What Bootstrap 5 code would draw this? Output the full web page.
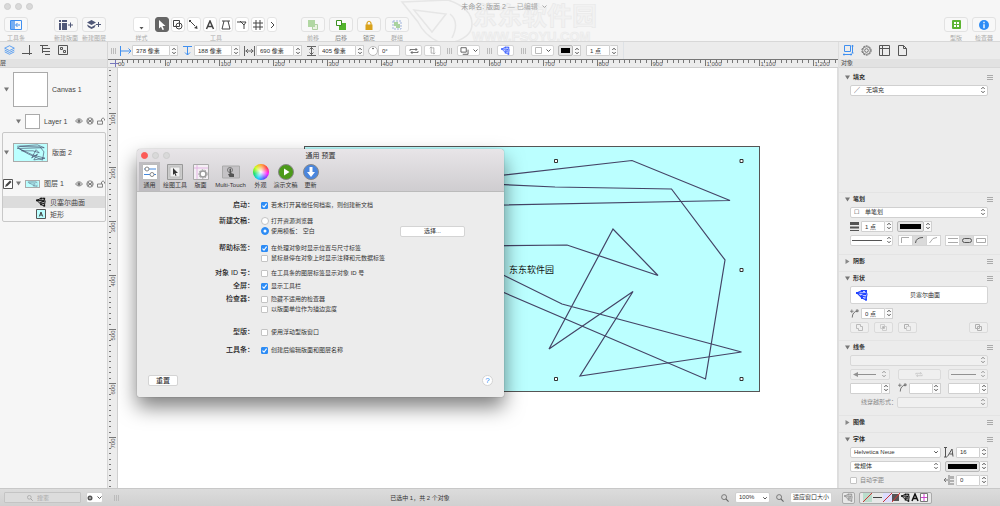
<!DOCTYPE html>
<html lang="zh-CN">
<head>
<meta charset="utf-8">
<meta name="viewport" content="width=device-width, initial-scale=1">
<title>未命名: 版面 2</title>
<link href="https://cdn.jsdelivr.net/npm/bootstrap@5.3.0/dist/css/bootstrap.min.css" rel="stylesheet">
<style>
body{font-family:"Liberation Sans","Noto Sans CJK SC",sans-serif;font-size:6px;line-height:8px;color:#333;background:#ececec;overflow:hidden}
svg{display:block;flex:none}
.ln{fill:none;stroke:currentColor;stroke-width:1}
/* window header */
.topbar{height:42px;background:#f6f6f6;border-bottom:1px solid #d8d8d8;overflow:hidden}
.titlerow{height:13px;font-size:7px;color:#aaa}
.dot{width:7px;height:7px;border-radius:50%;background:#d9d9d9;border:1px solid #cdcdcd}
.tool-item{width:24px;color:#aaa}
.tool-item span,.tool-label{display:block;text-align:center;white-space:nowrap;margin-top:2px;color:#aaa}
.tbtn{height:15px;width:24px;padding:0;border:1px solid #e2e2e2;border-radius:3px;background:#f8f8f8;display:flex;align-items:center;justify-content:center;color:#505878}
.sq{width:14px;background:#fff;border-color:#e4e4e4;color:#444}
.sq.active{background:#666!important;color:#fff!important;border-color:#666!important}
.w-style{width:17px}
.gap-a{margin-left:26px}.gap-b{margin-left:4px}.gap-c{margin-left:5px}.gap-d{margin-left:24px}
.wm{left:40%;top:0;pointer-events:none}
/* side columns */
.side-l{width:108px;background:#f6f6f6;border-right:1px solid #d6d6d6;flex:none}
.side-r{width:162px;background:#ececec;border-left:1px solid #dedede;flex:none}
.strip{height:17px;background:#ececec}
.caption{height:9px;line-height:9px;background:#e2e2e2;color:#444;border-bottom:1px solid #d8d8d8}
.tabbtn{width:18px;height:16px;padding:0;border:0;color:#555;display:flex;align-items:center;justify-content:center}
.blue{color:#3f8ff0!important}
.tree{font-size:7px;line-height:9px;color:#444}
.thumb{border:1px solid #aaa;background:#fff;flex:none}
.th-big{width:35px;height:35px}.th-wide{width:35px;height:19px;background:#bff}
.th-sm{width:15px;height:15px}.th-flat{width:15px;height:8px;background:#bff}
.box-sel{border:1px solid #c8c8c8;border-radius:2px;margin:4px 1px 0 2px;height:90px}
.sel-row{background:#dcdcdc}
.r-big{height:42px}.r-sm{height:22px}.r-leaf{height:12px;padding-left:33px}
/* controls */
.ctl{height:11px;min-height:0;padding:0 3px;font-size:6px;line-height:9px;border:1px solid #d0d0d0;border-radius:1px;background-color:#fff;color:#333;min-width:0;box-shadow:none}
select.ctl{border-radius:2px;background-image:url("data:image/svg+xml,%3Csvg xmlns='http://www.w3.org/2000/svg' viewBox='0 0 6 8'%3E%3Cpath d='M1.3 3L3 1.2 4.7 3M1.3 5L3 6.8 4.7 5' fill='none' stroke='%23555' stroke-width='.9'/%3E%3C/svg%3E");background-size:6px 8px;background-position:right 1px center;padding-right:8px}
select.ctl.down{background-image:url("data:image/svg+xml,%3Csvg xmlns='http://www.w3.org/2000/svg' viewBox='0 0 6 8'%3E%3Cpath d='M1.2 3.2L3 5 4.8 3.2' fill='none' stroke='%23444' stroke-width='.9'/%3E%3C/svg%3E")}
.ctl:disabled{background-color:#f2f2f2;opacity:.7}
.field{display:flex;flex:none}
.field .ctl{flex:1 1 0;width:0}
.stp{width:8px;height:11px;padding:0;border:1px solid #d0d0d0;border-left:0;background:#fafafa;border-radius:1px;display:flex;align-items:center;justify-content:center;color:#444;flex:none}
.w46{width:46px}.w32{width:32px}.w22{width:22px}.w35{width:35px}.w42{width:42px}.w40{width:40px}
.pbtn{height:11px;padding:0;border:1px solid #d4d4d4;border-radius:2px;background:#fff;color:#555;display:flex;align-items:center;justify-content:center;flex:none;font-size:6px;line-height:9px}
.pbtn:disabled{opacity:.6;background:#f2f2f2;border-color:#d0d0d0}
.w17{width:17px}.w19{width:19px}.w23{width:23px}
.grip{width:5px;height:6px;border-left:1px solid #bbb;border-right:1px solid #bbb;flex:none;background:linear-gradient(90deg,transparent 1px,#bbb 1px,#bbb 2px,transparent 2px)}
.swatch{padding:2px;background:#e4e4e4;border-color:#b8b8b8;flex:1}
.swatch i{display:block;width:100%;height:5px;background:#000}
/* rulers and canvas */
.ruler{background:#ececec;font-size:6px;fill:#555}
.ruler-h{height:9px;border-top:1px solid #777;border-bottom:1px solid #cfcfcf}
.ruler-v{width:10px;border-right:1px solid #cfcfcf;flex:none}
.canvas{background:#fff;overflow:hidden;border-right:1px solid #ddd}
/* preference window */
.prefs{left:19px;top:81px;width:367px;min-height:248px;background:#ececec;border-radius:4px 4px 2px 2px;box-shadow:0 10px 20px rgba(0,0,0,.5),0 0 1px rgba(0,0,0,.5);color:#333}
.prefs-head{height:43px;background:linear-gradient(#e8e5e8,#cfcdd0);border-bottom:1px solid #bbb;border-radius:4px 4px 0 0}
.prefs-title{font-size:7px;height:13px;line-height:13px}
.ptab{border:0;border-radius:0;padding:0;height:29px;font-size:6px;line-height:9px;color:#333;flex:none;display:flex;flex-direction:column;align-items:center;justify-content:center;gap:1px;min-width:21px;background:none}
.ptab.active{background:#bfbdc1}
.hues{width:16px;height:16px;border-radius:50%;background:radial-gradient(circle,#fff,transparent 70%),conic-gradient(#ff9d20,#f33,#f0f,#44f,#0cf,#0d5,#cf0,#ff9d20)}
.prow{display:grid;grid-template-columns:117px 1fr;column-gap:7px}
.prow>b{font-size:7px;line-height:10px;font-weight:500;text-align:right;color:#222}
.opt{height:10px;display:flex;align-items:center;gap:3px;white-space:nowrap}
.opt .form-check-input{width:7px;height:7px;margin:0;border:1px solid #c4c4c4;flex:none;border-radius:1px;box-shadow:none}
.opt .form-check-input[type=checkbox]:checked{background-image:url("data:image/svg+xml,%3Csvg xmlns='http://www.w3.org/2000/svg' viewBox='0 0 7 7'%3E%3Cpath d='M1.5 3.6L3 5.2 5.6 1.6' fill='none' stroke='white' stroke-width='1.1'/%3E%3C/svg%3E");background-size:7px;background-position:center}
.opt .form-check-input[type=radio]{width:8px;height:8px;margin-right:-1px;border-radius:50%}
.opt .form-check-input:checked{background-color:#2d8cf5;border-color:#2d8cf5}
.mb6{margin-bottom:6px}.mb3{margin-bottom:3px}.mb13{margin-bottom:13px}.mb8{margin-bottom:8px}.mb5{margin-bottom:5px}
.w65{width:65px}.w30{width:30px}.w43{width:43px}
.help{width:11px;height:11px;border-radius:50%;color:#2d8cf5;font-size:8px}
/* inspector */
.sec{padding:0 12px 0 11px;border-bottom:1px solid #e4e4e4;flex:none}
.sec h6{height:12px;margin:0 -5px;font-size:6px;line-height:12px;font-weight:700;display:flex;align-items:center;gap:3px;color:#333}
.sec h6 svg:last-child{margin-left:auto}
.irow{height:14px;display:flex;align-items:center;justify-content:space-between}
.s-fill{height:122px}.s-stroke{height:62px}.s-shadow{height:17px}.s-shape{height:69px}.s-line{height:75px}.s-image{height:17px}
.seg .pbtn{width:15px;border-radius:0;margin-left:-1px}
.seg .pbtn.active{background:#dadada}
.shapebtn{height:18px;width:100%;padding:0 5px;color:#333}
/* footer */
.foot{height:18px;background:linear-gradient(#dcdcdc,#d0d0d0);border-top:1px solid #c8c8c8;flex:none}
.search{width:77px;background:#dcdcdc;border-color:#c4c4c4;padding-left:32px}
.search::placeholder{color:#aaa;opacity:1}
.mag{left:27px;top:3px}
.iconset{border:1px solid #aaa;border-radius:2px;height:12px;background:#e8e8e8}
</style>
</head>
<body class="vh-100 d-flex flex-column">
<svg width="0" height="0" class="position-absolute" aria-hidden="true">
 <defs>
 <symbol id="ud" viewBox="0 0 6 8"><path d="M1.300 3L3 1.200 4.700 3M1.300 5L3 6.800 4.700 5" fill="none" stroke="currentColor" stroke-width=".9"/></symbol>
 <symbol id="dn" viewBox="0 0 5 5"><path d="M0 .5H5L2.500 4.500Z" fill="#777"/></symbol>
 <symbol id="rt" viewBox="0 0 5 5"><path d="M.5 0V5L4.500 2.500Z" fill="#888"/></symbol>
 <symbol id="menu" viewBox="0 0 6 5"><path d="M0 .5H6M0 2.500H6M0 4.500H6" stroke="#999" stroke-width=".8"/></symbol>
 <symbol id="bez" viewBox="0 0 12 12"><path d="M1 3L9 1 11 5 10 11 6 9 2 5Z" fill="currentColor" opacity=".25"/><path d="M1 4L6 1.500 9.500 1.500 11 5 10 11 6 9 1 4 9 4.500 5 7 10 8" fill="none" stroke="currentColor" stroke-width="1.100"/><path d="M0 3h2v2H0zM5 1h2v2H5zM9 1h2v2H9zM9 9.500h2v2H9zM8 4h2v2H8zM5 8h2v2H5z" fill="currentColor"/></symbol>
 <symbol id="layers" viewBox="0 0 12 11"><path d="M6 .8L11.300 3.500 6 6.200 .7 3.500ZM.7 5.500L6 8.200 11.300 5.500M.7 7.500L6 10.200 11.300 7.500" fill="none" stroke="currentColor" stroke-width=".9"/></symbol>
 <symbol id="state" viewBox="0 0 30 8"><g fill="none" stroke="#777" stroke-width=".9"><path d="M.5 4Q4-.5 7.500 4 4 8 .5 4Z"/><circle cx="4" cy="4" r="1.200" fill="#777"/><circle cx="15" cy="4" r="3.200"/><path d="M12 4h6M13 2l2 2-2 2M17 2l-2 2 2 2M22.500 4h5v3.200h-5zM26.500 4V2q1.700-2.200 3 0v1.500"/></g></symbol>
 <symbol id="scribble" viewBox="304 147 456 245"><path d="M340 180L632 160 730 200 360 212M340 215L380 182 671 189 725 260 705 379 504 293 340 200M400 246L567 245 658 275 613 229 549 349 633 291 580 376 741 352 562 304 380 220" fill="none" stroke="#335" stroke-width="8"/></symbol>
 <symbol id="pencil" viewBox="0 0 10 10"><path d="M.5.5h9v9h-9z" fill="#fff" stroke="#555"/><path d="M2 8L3 5.500 7 1.500 8.500 3 4.500 7Z" fill="#444"/></symbol>
 <symbol id="swap" viewBox="0 0 10 8"><path d="M1 4V2.500H8M6.500 1L8 2.500 6.500 4M9 4V5.500H2M3.500 4L2 5.500 3.500 7" fill="none" stroke="currentColor" stroke-width=".8"/></symbol>
 <symbol id="copy" viewBox="0 0 10 9"><path d="M1 .8h6v5H1zM3 8.200h6V3" fill="none" stroke="currentColor"/></symbol>
 <symbol id="mg" viewBox="0 0 9 9"><circle cx="3.500" cy="3.500" r="2.800" fill="none" stroke="currentColor" stroke-width=".9"/><path d="M5.500 5.500L8.500 8.500" stroke="currentColor" stroke-width="1.300"/></symbol>
 <symbol id="corner" viewBox="0 0 10 9"><path d="M2.500 9Q2.500 2.500 9 1.500" fill="none" stroke="#666"/><path d="M0 2h4M2 0v4M7 .5h2v2H7z" stroke="#666" stroke-width=".8" fill="none"/></symbol>
 </defs>
</svg>

<header class="topbar position-relative flex-shrink-0">
 <div class="wm position-absolute" aria-hidden="true">
  <svg width="220" height="42"><g fill="none" stroke="#e6e6e6" stroke-width="1.500"><path d="M2 2L48 0Q72 8 72 24T44 44Q26 38 18 22ZM14 10l32 4-14 18ZM50 14q10 8 2 24"/></g>
  <text x="72" y="25" font-size="25" font-weight="700" fill="#f2f2f2" stroke="#e8e8e8" stroke-width=".6">东东软件园</text><text x="72" y="41" font-size="13" font-weight="700" fill="#f2f2f2" stroke="#e8e8e8" stroke-width=".5">WWW.FSOYU.COM</text></svg>
 </div>
 <div class="titlerow position-relative d-flex align-items-center">
  <div class="d-flex ps-1 position-absolute" style="gap:4px"><i class="dot"></i><i class="dot"></i><i class="dot"></i></div>
  <div class="w-100 d-flex justify-content-center align-items-center gap-1 ps-2"><div><span style="color:#999">未命名: 版面 2</span> — 已编辑</div><svg width="5" height="4"><path d="M.5.500l2 2 2-2" class="ln"/></svg></div>
 </div>
 <div class="d-flex px-1 pt-1 position-relative">
  <div class="tool-item"><button class="btn tbtn blue" aria-label="工具条"><svg width="12" height="10"><path class="ln" d="M.5.5h11v9H.5z"/><path d="M1 1h4v8H1z" fill="currentColor" opacity=".7"/><path d="M10 5H6M7.500 3L5.500 5l2 2" class="ln"/></svg></button><span>工具条</span></div>
  <div class="tool-item gap-a"><button class="btn tbtn" aria-label="新建版面"><svg width="14" height="10"><path d="M0 0h2v2H0zM3 0h5v2H3zM0 3h2v7H0zM3 3h5v7H3z" fill="currentColor"/><path d="M9 5h5M11.500 2.500v5" class="ln"/></svg></button><span>新建版面</span></div>
  <div class="tool-item gap-b"><button class="btn tbtn" aria-label="新建图层"><svg width="14" height="10"><path d="M4.500 0L9 2.500 4.500 5 0 2.500ZM0 4.500L4.500 7 9 4.500 7.500 7.500 4.500 9 1 7Z" fill="currentColor"/><path d="M9 4.500h5M11.500 2v5" class="ln"/></svg></button><span>新建图层</span></div>
  <div class="tool-item w-style" style="margin-left:27px"><button class="btn tbtn sq w-100 align-items-end" aria-label="样式"><svg width="5" height="4"><path d="M.5 0h4L2.500 2.500Z" fill="#555"/></svg></button><span>样式</span></div>
  <div class="gap-c">
   <div class="d-flex" style="gap:2px">
    <button class="btn tbtn sq active" aria-label="选择"><svg width="8" height="10"><path d="M1 0L7.500 6H4.500L6 9.500 4.500 10 3 6.800 1 8.500Z" fill="currentColor"/></svg></button>
    <button class="btn tbtn sq" aria-label="形状"><svg width="10" height="10"><path d="M.5.5h6v6h-6z" class="ln"/><circle cx="6" cy="6" r="3" class="ln"/></svg></button>
    <button class="btn tbtn sq" aria-label="线条"><svg width="10" height="10"><path d="M1 1l5 5" class="ln"/><path d="M5 8l3.500 1L8 5.500ZM0 0h2v2H0z" fill="currentColor"/></svg></button>
    <button class="btn tbtn sq" aria-label="文本"><svg width="10" height="10"><path d="M1.500 9L5 1l3.500 8M3 6.500h4" fill="none" stroke="currentColor" stroke-width="1.500"/></svg></button>
    <button class="btn tbtn sq" aria-label="钢笔"><svg width="10" height="10"><path d="M1 1h8M3 1L1 9h8L7 1" class="ln"/></svg></button>
    <button class="btn tbtn sq" aria-label="编辑点"><svg width="10" height="10"><path d="M0 2h9M3 1l4 4V9M7 5l2-3" class="ln"/></svg></button>
    <button class="btn tbtn sq" aria-label="画板"><svg width="10" height="10"><path d="M3 0v10M7 0v10M0 3h10M0 7h10" class="ln"/></svg></button>
    <button class="btn tbtn sq" style="width:10px" aria-label="更多"><svg width="5" height="8"><path d="M1 1l3 3-3 3" class="ln"/></svg></button>
   </div>
   <span class="tool-label">工具</span>
  </div>
  <div class="tool-item gap-d"><button class="btn tbtn" aria-label="前移"><svg width="10" height="10" opacity=".5"><path d="M4.500 4.500h5v5h-5z" fill="#dec" stroke="#6aa84f"/><path d="M0 0h7v7H0z" fill="#6db84f"/></svg></button><span>前移</span></div>
  <div class="tool-item gap-b"><button class="btn tbtn" aria-label="后移"><svg width="10" height="10"><path d="M3 3h7v7H3z" fill="#53b52b"/><path d="M.5.5h5v5h-5z" fill="#fff" stroke="#3b8f20"/></svg></button><span style="color:#888">后移</span></div>
  <div class="tool-item gap-b"><button class="btn tbtn" aria-label="锁定"><svg width="8" height="10"><path d="M2 5V3q2-3.500 4 0v2" fill="none" stroke="#d9a21b" stroke-width="1.200"/><path d="M.5 4.500h7V10h-7z" fill="#d9a21b"/></svg></button><span style="color:#888">锁定</span></div>
  <div class="tool-item gap-b"><button class="btn tbtn" aria-label="群组"><svg width="10" height="10" opacity=".6"><path d="M1 1h8v8H1z" fill="none" stroke="#68c" stroke-dasharray="2 1"/><path d="M2 2h4v4H2zM4 4h4v4H4z" fill="#7b6"/></svg></button><span>群组</span></div>
  <div class="tool-item ms-auto"><button class="btn tbtn" aria-label="型版"><svg width="9" height="9"><rect width="9" height="9" rx="1" fill="#5cb431"/><path d="M2 2h2v2H2zM5 2h2v2H5zM2 5h2v2H2zM5 5h2v2H5z" fill="#fff"/></svg></button><span>型版</span></div>
  <div class="tool-item gap-b"><button class="btn tbtn" aria-label="检查器"><svg width="10" height="10"><circle cx="5" cy="5" r="5" fill="#2d8cf5"/><path d="M5 1.800v1.400M5 4.200v4" stroke="#fff" stroke-width="1.400"/></svg></button><span>检查器</span></div>
 </div>
</header>

<main class="d-flex flex-grow-1" style="min-height:0">
 <aside class="side-l">
  <nav class="strip d-flex" aria-label="侧栏">
   <button class="btn tabbtn blue" aria-label="层"><svg width="11" height="10"><use href="#layers"/></svg></button>
   <button class="btn tabbtn" aria-label="参考线"><svg width="10" height="10"><path d="M0 8.500h10M7.500 0v10" class="ln"/></svg></button>
   <button class="btn tabbtn" aria-label="大纲"><svg width="10" height="10"><path d="M0 .5h8M2.500 1v7M3 3.500h7M3 6.500h7M5 9.500h5" class="ln" stroke-dasharray="none"/></svg></button>
   <button class="btn tabbtn" aria-label="选择"><svg width="10" height="10"><path d="M.5.500h9v9h-9zM2.500 2.500h2v2h-2zM5.500 5.500h2v2h-2z" class="ln"/></svg></button>
  </nav>
  <div class="caption">层</div>
  <div class="tree">
   <div class="r-big d-flex align-items-center ps-1"><svg class="me-1" width="5" height="5"><use href="#dn"/></svg><i class="thumb th-big"></i><span class="ms-1">Canvas 1</span></div>
   <div class="r-sm d-flex align-items-center" style="padding-left:16px"><svg width="5" height="5" class="me-1"><use href="#dn"/></svg><i class="thumb th-sm me-1"></i><span>Layer 1</span><svg class="ms-auto" style="margin-right:2px" width="30" height="8"><use href="#state"/></svg></div>
   <div class="box-sel mt-0">
    <div class="d-flex align-items-center" style="height:38px;padding-left:1px"><svg class="me-1" width="5" height="5"><use href="#dn"/></svg><i class="thumb th-wide"><svg width="33" height="17"><use href="#scribble"/></svg></i><span class="ms-1">版面 2</span></div>
    <div class="d-flex align-items-center" style="height:25px"><svg width="10" height="10"><use href="#pencil"/></svg><svg width="5" height="5" class="me-1" style="margin-left:3px"><use href="#dn"/></svg><i class="thumb th-flat me-1"><svg width="13" height="6"><use href="#scribble"/></svg></i><span>图层 1</span><svg class="ms-auto" width="30" height="8"><use href="#state"/></svg></div>
    <div class="r-leaf sel-row d-flex align-items-center gap-1"><svg width="10" height="10" color="#111"><use href="#bez"/></svg>贝塞尔曲面</div>
    <div class="r-leaf d-flex align-items-center gap-1"><svg width="10" height="10"><path d="M.5.5h9v9h-9z" fill="#bff" stroke="#555"/><path d="M3.300 7.500L5 3l1.700 4.500M4 6h2" class="ln" /></svg>矩形</div>
   </div>
  </div>
 </aside>

 <section class="flex-grow-1 d-flex flex-column" style="min-width:0">
  <div class="strip d-flex align-items-center flex-shrink-0" style="padding-left:3px">
   <i class="grip me-1"></i>
   <svg width="12" height="10" class="blue"><path d="M.5 0v10M1 5h10M8.500 2.500L11 5 8.500 7.500" class="ln"/></svg>
   <div class="field w46"><input class="form-control ctl" value="378 像素" aria-label="X"><button class="stp" aria-label="调整"><svg width="6" height="8"><use href="#ud"/></svg></button></div>
   <svg width="12" height="10" class="blue ms-1"><path d="M1 .5h9M5.500 1v8M3 6.500L5.500 9 8 6.500" class="ln"/></svg>
   <div class="field w46"><input class="form-control ctl" value="188 像素" aria-label="Y"><button class="stp" aria-label="调整"><svg width="6" height="8"><use href="#ud"/></svg></button></div>
   <svg width="12" height="10" class="ms-1" color="#666"><path d="M.5 0v10M10.500 0v10M1.500 5h8M4 3L2 5l2 2M7 3l2 2-2 2" class="ln"/></svg>
   <div class="field w46"><input class="form-control ctl" value="690 像素" aria-label="宽"><button class="stp" aria-label="调整"><svg width="6" height="8"><use href="#ud"/></svg></button></div>
   <svg width="12" height="10" class="ms-1" color="#666"><path d="M1 .5h9M1 9.500h9M5.500 1v8M3.500 3.500l2-2 2 2M3.500 6.500l2 2 2-2" class="ln"/></svg>
   <div class="field w46"><input class="form-control ctl" value="405 像素" aria-label="高"><button class="stp" aria-label="调整"><svg width="6" height="8"><use href="#ud"/></svg></button></div>
   <svg width="10" height="10" class="ms-1"><circle cx="5" cy="5" r="4.500" fill="#fff" stroke="#bbb"/><circle cx="5" cy="2.500" r=".8" fill="#444"/></svg>
   <input class="form-control ctl w22 flex-shrink-0" value="0°" aria-label="角度">
   <button class="pbtn w17 gap-c" aria-label="水平翻转"><svg width="10" height="8"><use href="#swap"/></svg></button>
   <button class="pbtn w17" style="margin-left:2px;color:#aaa" aria-label="垂直翻转"><svg width="9" height="9" viewBox="0 0 8 10"><path d="M1 2.500L2.500 1 4 2.500M2.500 1V8H4M4 2h1.500V9M4 7.500L5.500 9 7 7.500" class="ln"/></svg></button>
   <i class="grip" style="margin-left:6px"></i>
   <button class="pbtn w23 gap-c gap-1" aria-label="阴影"><svg width="9" height="8"><use href="#copy"/></svg><svg width="5" height="5"><path d="M.5 1.500l2 2 2-2" class="ln"/></svg></button>
   <i class="grip" style="margin-left:7px"></i>
   <button class="pbtn w17 gap-c" aria-label="贝塞尔曲面"><svg width="9" height="9" color="#46f"><use href="#bez"/></svg></button>
   <i class="grip" style="margin-left:7px"></i>
   <button class="pbtn w23 gap-c gap-1" aria-label="填充"><svg width="7" height="7"><path d="M.5.5h6v6h-6z" fill="#fff" stroke="#bbb"/></svg><svg width="5" height="5"><path d="M.5 1.500l2 2 2-2" class="ln"/></svg></button>
   <div class="field gap-b" style="width:23px"><button class="pbtn swatch" aria-label="笔划颜色"><i></i></button><button class="stp" aria-label="调整"><svg width="6" height="8"><use href="#ud"/></svg></button></div>
   <div class="field w32 gap-c"><input class="form-control ctl" value="1 点" aria-label="笔划宽度"><button class="stp" aria-label="调整"><svg width="6" height="8"><use href="#ud"/></svg></button></div>
   <i class="border-start h-100 gap-c"></i>
  </div>
  <svg class="ruler ruler-h w-100 flex-shrink-0" id="rh"></svg>
  <div class="flex-grow-1 d-flex" style="min-height:0">
   <svg class="ruler ruler-v h-100" id="rv"></svg>
   <div class="canvas flex-grow-1 position-relative">
    <svg class="w-100 h-100 position-absolute">
     <g transform="translate(-118 -68)">
      <rect x="304.500" y="146.500" width="455" height="245" fill="#bff" stroke="#555"/>
      <g fill="none" stroke="#446" stroke-width="1.200">
       <path d="M400 187L632 160.500 730 200.500 400 207"/>
       <path d="M400 180L555 187 671.500 189 725 260 705.500 379 400 248"/>
       <path d="M400 247L567 245 658 275.500 613 229 549 349 633 291.500 580 376 741.500 352 562 304 400 224"/>
      </g>
      <path fill="#fff" stroke="#333" d="M554.500 159.500h3v3h-3zM740 159.500h3v3h-3zM740 268.500h3v3h-3zM554.500 377.500h3v3h-3zM740 377.500h3v3h-3z"/>
      <text x="509" y="273" font-size="9" fill="#111">东东软件园</text>
     </g>
    </svg>

    <div class="prefs position-absolute d-flex flex-column" role="dialog" aria-label="通用 预置">
     <div class="prefs-head">
      <div class="prefs-title position-relative text-center">
       <div class="position-absolute d-flex ps-1" style="gap:4px;top:3px"><i class="dot" style="background:#fc5b57;border-color:#fc5b57"></i><i class="dot"></i><i class="dot"></i></div>
       通用 预置
      </div>
      <div class="d-flex" style="padding-left:2px">
       <button class="btn ptab active"><svg width="16" height="16"><path d="M.5.500h15v15H.5z" fill="#fff" stroke="#bbb"/><path d="M2 5h12M2 10.500h12" stroke="#48d"/><circle cx="5" cy="5" r="2" fill="#fff" stroke="#888"/><circle cx="10" cy="10.500" r="2" fill="#fff" stroke="#888"/></svg>通用</button>
       <button class="btn ptab" style="width:30px"><svg width="16" height="16"><path d="M.5.500h15v15H.5z" fill="#ccc" stroke="#999"/><path d="M3 3h10v10H3z" fill="#f2f2f2" stroke="#bbb"/><path d="M6 4l5 5H8.500l1 2.500-1 .5-1-2.500L6 11Z" fill="#333"/></svg>绘图工具</button>
       <button class="btn ptab"><svg width="16" height="16"><path d="M.5.500h15v15H.5z" fill="#f4f0f4" stroke="#aaa"/><path d="M4 1v14M1 4h14" stroke="#e4b4e4"/><circle cx="10" cy="10" r="3" fill="#fff" stroke="#999" stroke-width="1.500"/><circle cx="10" cy="10" r="4.200" fill="none" stroke="#999" stroke-dasharray="1.500 1.500"/></svg>版面</button>
       <button class="btn ptab" style="width:39px"><svg width="18" height="16"><path d="M.5 2h17v12H.5z" fill="#c4c2c5" stroke="#aaa"/><circle cx="8" cy="6" r="2.500" fill="none" stroke="#777"/><path d="M7.500 5q1-1 1.500 0v4l3 1v3H7.500L6 10h1.500Z" fill="#555"/></svg>Multi-Touch</button>
       <button class="btn ptab"><i class="hues"></i>外观</button>
       <button class="btn ptab" style="width:29px"><svg width="16" height="16"><circle cx="8" cy="8" r="7.500" fill="#4c9a1a" stroke="#888"/><path d="M6 4.500L11.500 8 6 11.500Z" fill="#fff"/></svg>演示文稿</button>
       <button class="btn ptab"><svg width="16" height="16"><circle cx="8" cy="8" r="7.500" fill="#4a86dd" stroke="#888"/><path d="M6.500 3h3v5H12l-4 5-4-5h2.500Z" fill="#fff"/></svg>更新</button>
      </div>
     </div>
     <form class="flex-grow-1 d-flex flex-column" style="padding-top:8px">
      <div class="prow mb6"><b>启动：</b><div><label class="opt"><input class="form-check-input" type="checkbox" checked>若未打开其他任何档案，则创建新文档</label></div></div>
      <div class="prow mb6"><b>新建文稿：</b><div><label class="opt"><input class="form-check-input" type="radio" name="n">打开资源浏览器</label>
       <div class="d-flex"><label class="opt"><input class="form-check-input" type="radio" name="n" checked>使用模板： 空白</label><button type="button" class="pbtn w65 ms-auto" style="margin-right:39px;color:#333">选择...</button></div></div></div>
      <div class="prow mb5"><b>帮助标签：</b><div><label class="opt"><input class="form-check-input" type="checkbox" checked>在处理对象时显示位置与尺寸标签</label><label class="opt"><input class="form-check-input" type="checkbox">鼠标悬停在对象上时显示注释和元数据标签</label></div></div>
      <div class="prow mb3"><b>对象 ID 号：</b><div><label class="opt"><input class="form-check-input" type="checkbox">在工具条的图层标签显示对象 ID 号</label></div></div>
      <div class="prow mb3"><b>全屏：</b><div><label class="opt"><input class="form-check-input" type="checkbox" checked>显示工具栏</label></div></div>
      <div class="prow mb13"><b>检查器：</b><div><label class="opt"><input class="form-check-input" type="checkbox">隐藏不适用的检查器</label><label class="opt"><input class="form-check-input" type="checkbox">以版面单位作为描边宽度</label></div></div>
      <div class="prow mb8"><b>型版：</b><div><label class="opt"><input class="form-check-input" type="checkbox">使用浮动型版窗口</label></div></div>
      <div class="prow"><b>工具条：</b><div><label class="opt"><input class="form-check-input" type="checkbox" checked>创建后编辑版面和图层名称</label></div></div>
      <div class="mt-auto d-flex justify-content-between align-items-center" style="padding:0 11px 11px">
       <button type="button" class="pbtn w30" style="color:#222;font-size:7px">重置</button><button type="button" class="pbtn help">?</button>
      </div>
     </form>
    </div>
   </div>
  </div>
 </section>

 <aside class="side-r d-flex flex-column overflow-hidden">
  <nav class="strip d-flex align-items-center flex-shrink-0" aria-label="检查器">
   <button class="btn tabbtn blue" aria-label="对象"><svg width="11" height="11"><path d="M1.500.500h6v6h-6zM9.500 0v8M0 9.500h9M8.500 1h2M8.500 8h2M1 8.500v2M8 8.500v2" class="ln"/></svg></button>
   <button class="btn tabbtn" aria-label="属性"><svg width="11" height="11"><circle cx="5.500" cy="5.500" r="4.600" fill="none" stroke="currentColor" stroke-width=".9" stroke-dasharray="2 .9"/><circle cx="5.500" cy="5.500" r="3.800" fill="none" stroke="currentColor" stroke-width=".6"/><circle cx="5.500" cy="5.500" r="1.800" fill="none" stroke="currentColor" stroke-width=".8"/></svg></button>
   <button class="btn tabbtn" aria-label="画布"><svg width="11" height="11"><path d="M.5.500h10v10H.5zM3.500.500v10M.5 3.500h10" class="ln"/></svg></button>
   <button class="btn tabbtn" aria-label="文稿"><svg width="9" height="11"><path d="M.5.500h5l3 3v7H.5zM5.500.500v3h3" class="ln"/></svg></button>
  </nav>
  <div class="caption flex-shrink-0" style="padding-left:2px">对象</div>
  <div style="height:3px;flex:none"></div>
  <section class="sec s-fill"><h6><svg width="5" height="5"><use href="#dn"/></svg>填充<svg width="6" height="5"><use href="#menu"/></svg></h6>
   <div class="irow"><select class="form-select ctl w-100" aria-label="填充"><option>╱　无填充</option></select></div></section>
  <section class="sec s-stroke"><h6><svg width="5" height="5"><use href="#dn"/></svg>笔划<svg width="6" height="5"><use href="#menu"/></svg></h6>
   <div class="irow"><select class="form-select ctl w-100" aria-label="笔划"><option>☐　单笔划</option></select></div>
   <div class="irow justify-content-start"><svg width="9" height="9"><path d="M0 0h9v3H0zM0 4.500h9v2H0zM0 8h9v1H0z" fill="#555"/></svg><div class="field w32" style="margin-left:2px"><input class="form-control ctl" value="1 点" aria-label="宽度"><button class="stp" aria-label="调整"><svg width="6" height="8"><use href="#ud"/></svg></button></div><div class="field w35 gap-b"><button class="pbtn swatch" aria-label="颜色"><i></i></button><button class="stp" aria-label="调整"><svg width="6" height="8"><use href="#ud"/></svg></button></div></div>
   <div class="irow"><button class="pbtn w43 gap-1" aria-label="线型"><svg width="30" height="1"><path d="M0 .5h30" class="ln"/></svg><svg width="6" height="8"><use href="#ud"/></svg></button>
    <div class="seg d-flex"><button class="pbtn" aria-label="直角"><svg width="8" height="6"><path d="M.5 6V.5H8" stroke="#aaa" fill="none"/></svg></button><button class="pbtn active" aria-label="圆角"><svg width="8" height="6"><path d="M.5 6Q1 .5 8 .5" class="ln"/></svg></button><button class="pbtn" aria-label="斜角"><svg width="8" height="6"><path d="M.5 6L4 1.500 8 .5" stroke="#aaa" fill="none"/></svg></button></div>
    <div class="seg d-flex"><button class="pbtn" aria-label="平端"><svg width="10" height="5"><path d="M0 .5h10M0 4.500h10" stroke="#aaa" fill="none"/></svg></button><button class="pbtn active" aria-label="圆端"><svg width="10" height="5"><rect x=".5" y=".5" width="9" height="4" rx="2" class="ln"/></svg></button><button class="pbtn" aria-label="方端"><svg width="10" height="5"><path d="M.5.500h9v4h-9z" stroke="#aaa" fill="none"/></svg></button></div></div></section>
  <section class="sec s-shadow"><h6><svg width="5" height="5"><use href="#rt"/></svg>阴影<svg width="6" height="5"><use href="#menu"/></svg></h6></section>
  <section class="sec s-shape"><h6><svg width="5" height="5"><use href="#dn"/></svg>形状<svg width="6" height="5"><use href="#menu"/></svg></h6>
   <div class="irow" style="height:22px"><button class="pbtn shapebtn"><svg width="12" height="12" color="#24f"><use href="#bez"/></svg><span class="flex-grow-1">贝塞尔曲面</span></button></div>
   <div class="irow justify-content-start"><svg width="9" height="9"><use href="#corner"/></svg><div class="field w32" style="margin-left:2px"><input class="form-control ctl" value="0 点" aria-label="圆角"><button class="stp" aria-label="调整"><svg width="6" height="8"><use href="#ud"/></svg></button></div></div>
   <div class="irow justify-content-start" style="gap:5px"><button class="pbtn w19" disabled aria-label="联合"><svg width="7" height="7"><path d="M.5.500h4v2h2v4h-4v-2h-2z" stroke="#999" fill="none"/></svg></button><button class="pbtn w19" disabled aria-label="相交"><svg width="7" height="7"><path d="M.5.500h4v4h-4zM2.500 2.500h4v4h-4z" stroke="#bbb" fill="none"/><path d="M2.500 2.500h2v2h-2z" fill="#888"/></svg></button><button class="pbtn w19" disabled aria-label="减去"><svg width="7" height="7"><path d="M.5.500h4v2h-2v2h-2z" stroke="#888" fill="none"/><path d="M2.500 2.500h4v4h-4z" stroke="#bbb" fill="none"/></svg></button><button class="pbtn w19 ms-auto" disabled aria-label="还原"><svg width="7" height="7"><path d="M.5.500h4v4h-4zM2.500 2.500h4v4h-4z" stroke="#888" fill="none"/></svg></button></div></section>
  <section class="sec s-line"><h6><svg width="5" height="5"><use href="#dn"/></svg>线条<svg width="6" height="5"><use href="#menu"/></svg></h6>
   <div class="irow"><select class="form-select ctl w-100" disabled aria-label="线条"><option></option></select></div>
   <div class="irow"><button class="pbtn w40 gap-1" disabled aria-label="起点"><svg width="24" height="5"><path d="M5 0v5L0 2.500Z" fill="currentColor"/><path d="M3 2.500h20" class="ln"/></svg><svg width="6" height="8"><use href="#ud"/></svg></button><button class="pbtn w43" style="color:#999" disabled aria-label="反转"><svg width="8" height="7"><use href="#swap"/></svg></button><button class="pbtn w40 gap-1" disabled aria-label="终点"><svg width="25" height="1"><path d="M0 .5h25" class="ln"/></svg><svg width="6" height="8"><use href="#ud"/></svg></button></div>
   <div class="irow"><div class="field w40"><input class="form-control ctl" aria-label="起点值"><button class="stp" aria-label="调整"><svg width="6" height="8"><use href="#ud"/></svg></button></div><div class="d-flex" style="gap:2px"><svg width="9" height="9"><use href="#corner"/></svg><div class="field w32"><input class="form-control ctl" aria-label="曲度"><button class="stp" aria-label="调整"><svg width="6" height="8"><use href="#ud"/></svg></button></div></div><div class="field w40"><input class="form-control ctl" aria-label="终点值"><button class="stp" aria-label="调整"><svg width="6" height="8"><use href="#ud"/></svg></button></div></div>
   <div class="irow justify-content-end" style="color:#888"><label for="hop">线穿越形式：</label><select id="hop" class="form-select ctl" style="width:91px" disabled><option></option></select></div></section>
  <section class="sec s-image"><h6><svg width="5" height="5"><use href="#rt"/></svg>图像<svg width="6" height="5"><use href="#menu"/></svg></h6></section>
  <section class="sec border-0"><h6><svg width="5" height="5"><use href="#dn"/></svg>字体<svg width="6" height="5"><use href="#menu"/></svg></h6>
   <div class="irow"><select class="form-select ctl down" style="width:91px" aria-label="字体"><option>Helvetica Neue</option></select><div class="d-flex" style="gap:2px"><svg width="10" height="11" color="#555"><path d="M0 .5h3M1.500 1v9M0 10h3M3.500 9.500L8 2l1 7.500M5.500 7h3.500" class="ln"/></svg><div class="field w32"><input class="form-control ctl" value="16" aria-label="字号"><button class="stp" aria-label="调整"><svg width="6" height="8"><use href="#ud"/></svg></button></div></div></div>
   <div class="irow"><select class="form-select ctl" style="width:91px" aria-label="字形"><option>常规体</option></select><div class="field w43"><button class="pbtn swatch" aria-label="文字颜色"><i></i></button><button class="stp" aria-label="调整"><svg width="6" height="8"><use href="#ud"/></svg></button></div></div>
   <div class="irow"><label class="opt" style="color:#888"><input class="form-check-input" type="checkbox">自动字距</label><div class="d-flex" style="gap:2px"><svg width="10" height="10" color="#777"><path d="M0 5h4M2 3L0 5l2 2M5 0v10M7 1v3M9 1v3M6 6h4M7 8v2M9 8v2" class="ln"/></svg><div class="field w32"><input class="form-control ctl" value="0" aria-label="字距"><button class="stp" aria-label="调整"><svg width="6" height="8"><use href="#ud"/></svg></button></div></div></div></section>
 </aside>
</main>

<footer class="foot d-flex align-items-center">
 <div class="d-flex align-items-center flex-shrink-0 position-relative" style="width:108px;padding-left:4px;gap:5px">
  <input class="form-control ctl search flex-shrink-0" placeholder="搜索" aria-label="搜索"><svg class="mag position-absolute" width="6" height="6" color="#999"><use href="#mg"/></svg>
  <button class="pbtn w17 gap-1" aria-label="操作"><svg width="6" height="6"><circle cx="3" cy="3" r="2.500" fill="#555"/><circle cx="3" cy="3" r=".8" fill="#fff"/></svg><svg width="5" height="5"><path d="M.5 1.500l2 2 2-2" class="ln"/></svg></button>
 </div>
 <i class="grip" style="margin-left:6px"></i>
 <span class="flex-grow-1 text-center">已选中 1，共 2 个对象</span>
 <div class="d-flex align-items-center flex-shrink-0" style="gap:6px;padding-right:6px">
  <svg width="8" height="8" color="#666"><use href="#mg"/></svg>
  <select class="form-select ctl down w35" aria-label="缩放"><option>100%</option></select>
  <svg width="8" height="8" color="#666"><use href="#mg"/></svg>
  <button class="pbtn w42" style="color:#333">适应窗口大小</button>
 </div>
 <div class="d-flex align-items-center flex-shrink-0 gap-1" style="width:162px;padding-left:4px">
  <button class="iconset p-0 d-flex align-items-center justify-content-center" style="width:13px;color:#999" aria-label="样式"><svg width="9" height="9"><use href="#bez"/></svg></button>
  <div class="iconset d-flex align-items-center justify-content-between" style="width:73px;padding:0 3px">
   <svg width="9" height="9"><path d="M0 0h9v9H0z" fill="#bdc"/><path d="M0 9L9 0" stroke="#c33"/></svg>
   <svg width="9" height="9"><path d="M0 4.500h9" stroke="#444"/></svg>
   <svg width="9" height="9"><path d="M0 0h9v9H0z" fill="#ddf"/><path d="M0 9L9 0" stroke="#c33"/></svg>
   <svg width="8" height="9"><path d="M0 1h7v7H0z" fill="#555"/><path d="M0 9L8 0" stroke="#d33"/></svg>
   <svg width="9" height="9" color="#111"><use href="#bez"/></svg>
   <svg width="8" height="9"><path d="M1 8L4 1l3 7M2 5.500h4" fill="none" stroke="#111" stroke-width="1.500"/></svg>
   <svg width="8" height="9"><path d="M.5.500h7v8h-7z" fill="#fff" stroke="#777"/><path d="M4 1v7M1 4.500h6" stroke="#c4c"/></svg>
  </div>
 </div>
</footer>

<script src="https://cdn.jsdelivr.net/npm/bootstrap@5.3.0/dist/js/bootstrap.bundle.min.js"></script>
<script>
// Ruler ticks: 100 document units span 54 screen pixels.
function drawRulers(){
  var rh=document.getElementById('rh'), rv=document.getElementById('rv');
  var W=rh.getBoundingClientRect().width, H=rv.getBoundingClientRect().height;
  var h='<path stroke="#77b" d="M7.500 0v9M2 3.500h9"/><text x="10" y="6">00</text>', v='', i, x;
  for(i=-8;(x=Math.round(57+i*5.4)+.5)<W;i++){
    h+='<path stroke="#777" d="M'+x+' 0v'+(i%10?3:6)+'"/>';
    if(i%10===0&&x+18<W)h+='<text x="'+(x+1)+'" y="6">'+(i*10).toLocaleString('en-US')+'</text>';
  }
  for(i=0;(x=Math.round(i*5.4-9)+.5)<H;i++){
    v+='<path stroke="#777" d="M1 '+x+'h'+(i%10?2:7)+'"/>';
    if(i&&i%10===0&&x+12<H)v+='<text transform="translate(7 '+(x+11)+') rotate(-90)">'+i*10+'</text>';
  }
  rh.innerHTML=h; rv.innerHTML=v;
}
drawRulers();
addEventListener('resize',drawRulers);
</script>
</body>
</html>
